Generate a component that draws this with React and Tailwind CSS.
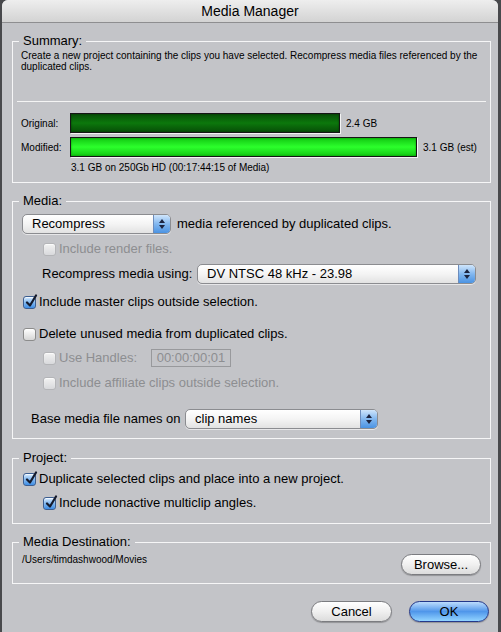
import React from 'react';
import clsx from 'clsx';

const font = { fontFamily: '"Liberation Sans", Arial, sans-serif' };

const Check = ({ checked, disabled }) => (
  <span
    className={clsx(
      'relative w-[13px] h-[13px] rounded-[3px] border shrink-0 shadow-[inset_0_1px_1px_rgba(255,255,255,0.8)]',
      checked
        ? 'border-[#3c5e90] bg-gradient-to-b from-[#d6ebff] via-[#7fb6ee] to-[#3d8ee6]'
        : disabled
        ? 'border-[#b4b5b8] bg-gradient-to-b from-[#f2f2f2] to-[#d8d9dc]'
        : 'border-[#8c8c8c] bg-gradient-to-b from-[#ffffff] to-[#d6d6d6]'
    )}
  >
    {checked && (
      <svg className="absolute left-[1px] top-[-3px]" width="13" height="14" viewBox="0 0 13 14">
        <path d="M2 8.5 L5 11.5 L11 1.5" fill="none" stroke="#141a2c" strokeWidth="2.2" strokeLinecap="round" strokeLinejoin="round" />
      </svg>
    )}
  </span>
);

const CheckRow = ({ checked, disabled, children, className }) => (
  <div className={clsx('flex items-center gap-[3px] h-[16px]', className)}>
    <Check checked={checked} disabled={disabled} />
    <span className={clsx('text-[13px] leading-[16px]', disabled ? 'text-[#8d8e91]' : 'text-black')}>{children}</span>
  </div>
);

const Popup = ({ value, className }) => (
  <div
    className={clsx(
      'flex h-[20px] rounded-[5px] border border-[#8b8c90] overflow-hidden bg-gradient-to-b from-[#ffffff] via-[#f4f4f4] to-[#e2e2e2] shadow-[0_1px_0_rgba(255,255,255,0.6)]',
      className
    )}
  >
    <span className="flex-1 pl-[9px] text-[13px] leading-[18px] text-black">{value}</span>
    <span className="w-[17px] flex flex-col items-center justify-center gap-[2px] border-l border-[#6c8cbc] bg-gradient-to-b from-[#cfe5fb] via-[#82b7ef] to-[#4a93e3]">
      <svg width="6" height="4" viewBox="0 0 6 4"><path d="M0 4 L3 0 L6 4 Z" fill="#1c2440" /></svg>
      <svg width="6" height="4" viewBox="0 0 6 4"><path d="M0 0 L3 4 L6 0 Z" fill="#1c2440" /></svg>
    </span>
  </div>
);

const Group = ({ title, children, className }) => (
  <fieldset className={clsx('ml-[10px] w-[479px] border border-[#f6f6f7]', className)}>
    <legend className="ml-[6px] px-[4px] text-[13px] leading-[16px] text-black">{title}</legend>
    {children}
  </fieldset>
);

const PillButton = ({ children, primary, className }) => (
  <button
    className={clsx(
      'h-[21px] rounded-full border text-[13px] leading-[19px] shadow-[0_1px_1px_rgba(0,0,0,0.25)]',
      primary
        ? 'border-[#23388a] bg-gradient-to-b from-[#bcdcfc] via-[#4f96ea] to-[#92d4ff] text-black'
        : 'border-[#7b7c80] bg-gradient-to-b from-[#ffffff] via-[#f0f0f0] to-[#dcdcdc] text-black',
      className
    )}
  >
    {children}
  </button>
);

const Bar = ({ width, bright }) => (
  <div className="h-[20px] border border-[#151515] shadow-[1px_1px_0_#f4f4f4]" style={{ width }}>
    <div
      className={clsx(
        'h-full',
        bright
          ? 'bg-gradient-to-b from-[#10c810] via-[#2cff2c] to-[#10c810] shadow-[inset_0_0_2px_#0a8a0a]'
          : 'bg-gradient-to-b from-[#074f07] via-[#0c780c] to-[#074f07] shadow-[inset_0_0_2px_#033303]'
      )}
    />
  </div>
);

export default function App() {
  return (
    <div className="w-[501px] h-[632px] bg-[#48494c] flex pl-[2px] pr-[3px] overflow-hidden" style={font}>
      <div className="flex-1 flex flex-col bg-[#c3c4c8] rounded-t-[6px]">
        {/* Title bar */}
        <div className="h-[23px] rounded-t-[6px] bg-gradient-to-b from-[#eeeeee] to-[#d3d3d3] border-b border-[#8e8e90] text-center text-[14px] leading-[23px] text-black">
          Media Manager
        </div>

        {/* Summary */}
        <Group title="Summary:" className="mt-[10px]">
          <div className="mx-[4px] h-[53px] border-b border-[#f4f4f4] pl-[4px] pt-[1px] text-[10px] leading-[11px] text-black">
            Create a new project containing the clips you have selected. Recompress media files referenced by the duplicated clips.
          </div>
          <div className="mt-[11px] flex items-center h-[20px]">
            <span className="w-[57px] pl-[8px] text-[10px]">Original:</span>
            <Bar width={270} />
            <span className="ml-[6px] text-[10px]">2.4 GB</span>
          </div>
          <div className="mt-[4px] flex items-center h-[20px]">
            <span className="w-[57px] pl-[8px] text-[10px]">Modified:</span>
            <Bar width={347} bright />
            <span className="ml-[6px] text-[10px]">3.1 GB (est)</span>
          </div>
          <div className="mt-[5px] pl-[58px] h-[12px] text-[10px] leading-[12px]">
            3.1 GB on 250Gb HD (00:17:44:15 of Media)
          </div>
          <div className="h-[8px]" />
        </Group>

        {/* Media */}
        <Group title="Media:" className="mt-[10px]">
          <div className="mt-[5px] flex items-center gap-[6px] pl-[9px]">
            <Popup value="Recompress" className="w-[149px]" />
            <span className="text-[13px]">media referenced by duplicated clips.</span>
          </div>
          <CheckRow disabled className="mt-[7px] ml-[30px]">Include render files.</CheckRow>
          <div className="mt-[7px] flex items-center pl-[29px]">
            <span className="w-[155px] text-[13px]">Recompress media using:</span>
            <Popup value="DV NTSC 48 kHz - 23.98" className="w-[279px]" />
          </div>
          <CheckRow checked className="mt-[10px] ml-[10px]">Include master clips outside selection.</CheckRow>
          <CheckRow className="mt-[16px] ml-[10px]">Delete unused media from duplicated clips.</CheckRow>
          <div className="mt-[7px] flex items-center h-[18px] ml-[30px]">
            <div className="w-[108px]">
              <CheckRow disabled>Use Handles:</CheckRow>
            </div>
            <div className="w-[80px] h-[18px] border border-[#98999c] text-[13px] leading-[16px] text-[#8d8e91] text-center">
              00:00:00;01
            </div>
          </div>
          <CheckRow disabled className="mt-[8px] ml-[30px]">Include affiliate clips outside selection.</CheckRow>
          <div className="mt-[18px] flex items-center pl-[18px]">
            <span className="w-[154px] text-[13px]">Base media file names on</span>
            <Popup value="clip names" className="w-[193px]" />
          </div>
          <div className="h-[9px]" />
        </Group>

        {/* Project */}
        <Group title="Project:" className="mt-[11px]">
          <CheckRow checked className="mt-[5px] ml-[10px]">Duplicate selected clips and place into a new project.</CheckRow>
          <CheckRow checked className="mt-[8px] ml-[30px]">Include nonactive multiclip angles.</CheckRow>
          <div className="h-[12px]" />
        </Group>

        {/* Media Destination */}
        <Group title="Media Destination:" className="mt-[10px]">
          <div className="mt-[4px] flex items-start justify-between pl-[9px] pr-[9px]">
            <span className="text-[10px] leading-[12px]">/Users/timdashwood/Movies</span>
            <PillButton className="w-[80px]">Browse...</PillButton>
          </div>
          <div className="h-[8px]" />
        </Group>

        {/* Buttons */}
        <div className="mt-[17px] flex justify-end gap-[17px] pr-[9px]">
          <PillButton className="w-[81px]">Cancel</PillButton>
          <PillButton primary className="w-[80px]">OK</PillButton>
        </div>
      </div>
    </div>
  );
}
